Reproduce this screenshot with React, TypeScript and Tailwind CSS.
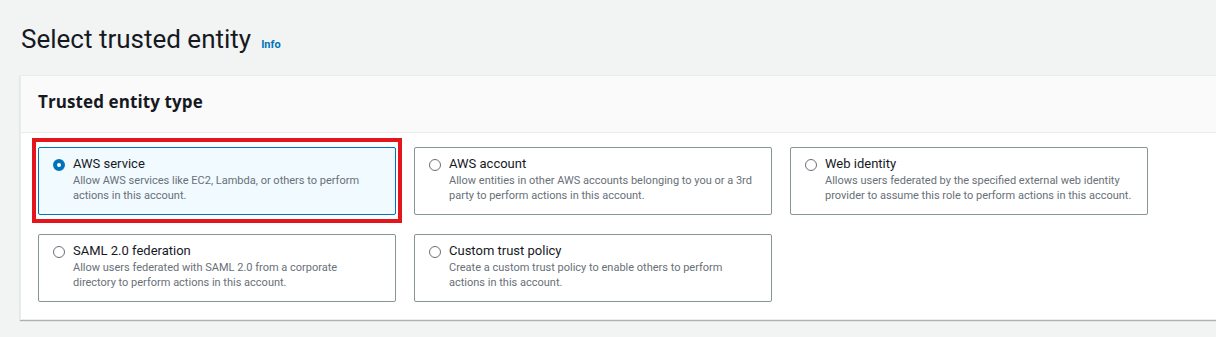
import React from "react";

type Opt = { title: string; desc: React.ReactNode; selected?: boolean };

const Radio = ({ selected }: { selected?: boolean }) =>
  selected ? (
    <span className="mt-[5px] box-border block h-[12px] w-[12px] shrink-0 rounded-full border-[4px] border-[#0073bb] bg-white" />
  ) : (
    <span className="mt-[5px] box-border block h-[12px] w-[12px] shrink-0 rounded-full border border-[#687078] bg-white" />
  );

const Card = ({ o }: { o: Opt }) => (
  <div
    className={
      "relative box-border flex h-[68px] items-start gap-[8px] rounded-[2px] border pl-[14px] pr-[10px] pt-[6px] " +
      (o.selected ? "border-[#0073bb] bg-[#f1faff]" : "border-[#879596] bg-white")
    }
  >
    <Radio selected={o.selected} />
    <div className="flex flex-col whitespace-nowrap">
      <div className="text-[13px] leading-[19px] text-[#16191f]">{o.title}</div>
      <div className="text-[11px] leading-[15px] text-[#687078]">{o.desc}</div>
    </div>
    {o.selected && (
      <div className="pointer-events-none absolute left-[-7px] right-[-7px] top-[-10px] bottom-[-9px] border-[4px] border-[#e3161e]" />
    )}
  </div>
);

export default function App() {
  const opts: Opt[] = [
    {
      title: "AWS service",
      desc: (
        <>
          Allow AWS services like EC2, Lambda, or others to perform
          <br />
          actions in this account.
        </>
      ),
      selected: true,
    },
    {
      title: "AWS account",
      desc: (
        <>
          Allow entities in other AWS accounts belonging to you or a 3rd
          <br />
          party to perform actions in this account.
        </>
      ),
    },
    {
      title: "Web identity",
      desc: (
        <>
          Allows users federated by the specified external web identity
          <br />
          provider to assume this role to perform actions in this account.
        </>
      ),
    },
    {
      title: "SAML 2.0 federation",
      desc: (
        <>
          Allow users federated with SAML 2.0 from a corporate
          <br />
          directory to perform actions in this account.
        </>
      ),
    },
    {
      title: "Custom trust policy",
      desc: (
        <>
          Create a custom trust policy to enable others to perform
          <br />
          actions in this account.
        </>
      ),
    },
  ];
  return (
    <div
      className="h-[337px] w-[1216px] overflow-hidden bg-[#f2f3f3] pl-[20px]"
      style={{ fontFamily: 'Roboto, "Noto Sans", Arial, sans-serif' }}
    >
      <div className="flex items-baseline gap-[10px] pl-[1px] pt-[23px]">
        <h1 className="text-[26px] font-normal leading-[32px] text-[#16191f]">Select trusted entity</h1>
        <span className="text-[11px] font-bold text-[#0073bb]">Info</span>
      </div>
      <div className="mt-[20px] w-[1220px] border border-[#eaeded] bg-white shadow-[0_1px_1px_0_rgba(0,28,36,0.3)]">
        <div className="box-border h-[57px] border-b border-[#eaeded] bg-[#fafafa] pl-[17px] pt-[14px]">
          <h2
            className="text-[17px] font-bold leading-[24px] tracking-[0.1px] text-[#16191f]"
            style={{ fontFamily: '"Open Sans", Roboto, Arial, sans-serif' }}
          >
            Trusted entity type
          </h2>
        </div>
        <div className="grid grid-cols-[358px_358px_358px] gap-x-[18px] gap-y-[19px] pb-[17px] pl-[17px] pt-[14px]">
          {opts.map((o) => (
            <Card key={o.title} o={o} />
          ))}
        </div>
      </div>
    </div>
  );
}
